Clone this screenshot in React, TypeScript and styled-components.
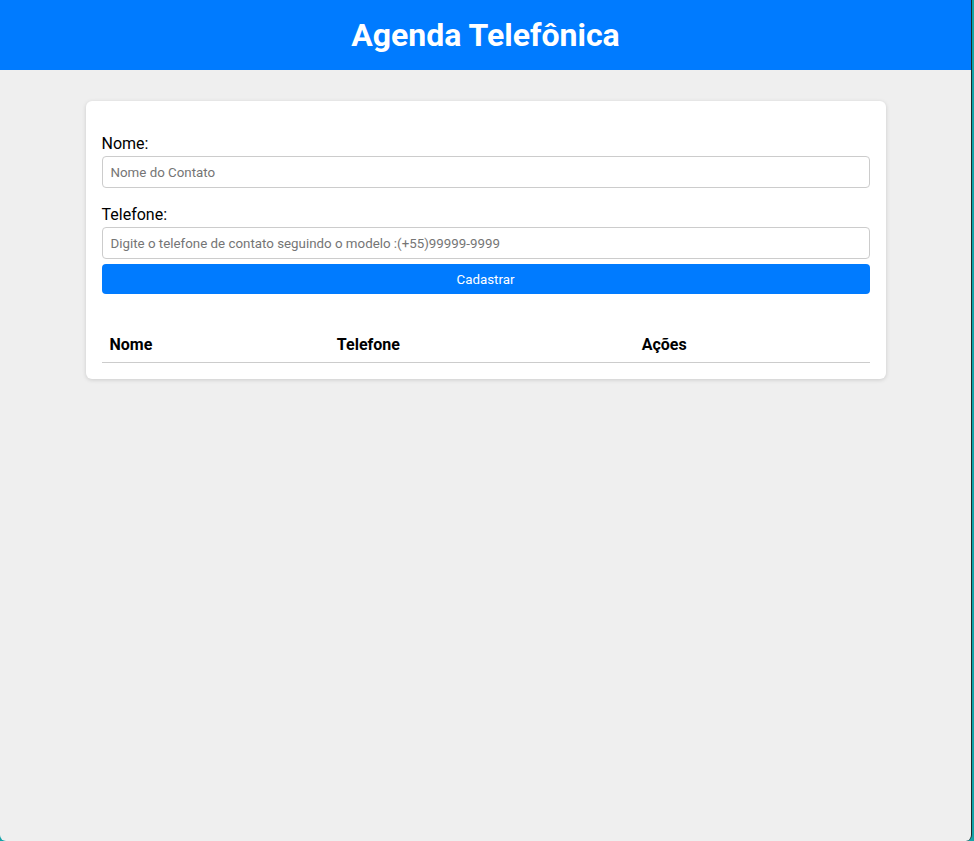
import React, { useState } from 'react';
import styled, { createGlobalStyle } from 'styled-components';

const GlobalStyle = createGlobalStyle`
  html {
    background-color: #13a3a8;
  }
  body {
    margin: 0;
    font-family: Roboto, "Liberation Sans", Arial, sans-serif;
  }
`;

const Page = styled.div`
  min-height: 100vh;
  margin-right: 2px;
  background-color: #efefef;
  border-right: 1px solid #1d2a2a;
  border-radius: 0 0 6px 6px;
  overflow: hidden;
`;

const Header = styled.header`
  height: 70px;
  display: flex;
  align-items: center;
  justify-content: center;
  background-color: #007bff;
`;

const Title = styled.h1`
  margin: 0;
  font-size: 32px;
  font-weight: bold;
  color: #fff;
`;

const Main = styled.main`
  display: flex;
  justify-content: center;
  padding-top: 31px;
`;

const Card = styled.div`
  width: 800px;
  box-sizing: border-box;
  padding: 0 16px 16px;
  background-color: #fff;
  border-radius: 6px;
  box-shadow: 0 1px 4px rgba(0, 0, 0, 0.15);
`;

const Form = styled.form`
  display: flex;
  flex-direction: column;
`;

const Group = styled.div`
  display: flex;
  flex-direction: column;
  margin-top: 17px;
  &:first-child {
    margin-top: 33px;
  }
`;

const Label = styled.label`
  font-size: 16px;
  line-height: 19px;
  color: #000;
  margin-bottom: 3px;
`;

const Input = styled.input`
  height: 32px;
  box-sizing: border-box;
  padding: 0 8px;
  border: 1px solid #ccc;
  border-radius: 4px;
  font-family: Roboto, "Liberation Sans", Arial, sans-serif;
  font-size: 13.333px;
  color: #000;
  outline: none;
  &::placeholder {
    color: #757575;
  }
`;

const Button = styled.button`
  margin-top: 5px;
  height: 30px;
  border: none;
  border-radius: 4px;
  background-color: #007bff;
  color: #fff;
  font-family: Roboto, "Liberation Sans", Arial, sans-serif;
  font-size: 13.333px;
  cursor: pointer;
`;

const Table = styled.table`
  width: 100%;
  margin-top: 33px;
  border-collapse: collapse;
`;

const Th = styled.th<{ $w: string }>`
  width: ${p => p.$w};
  padding: 8px;
  text-align: left;
  font-size: 16px;
  line-height: 19px;
  font-weight: bold;
  color: #000;
  border-bottom: 1px solid #ccc;
`;

interface Contato {
  nome: string;
  telefone: string;
}

export default function App(): React.ReactElement {
  const [nome, setNome] = useState('');
  const [telefone, setTelefone] = useState('');
  const [contatos, setContatos] = useState<Contato[]>([]);

  const cadastrar = (e: React.FormEvent) => {
    e.preventDefault();
    if (!nome || !telefone) return;
    setContatos([...contatos, { nome, telefone }]);
    setNome('');
    setTelefone('');
  };

  return (
    <>
      <GlobalStyle />
      <Page>
        <Header>
          <Title>Agenda Telefônica</Title>
        </Header>
        <Main>
          <Card>
            <Form onSubmit={cadastrar}>
              <Group>
                <Label htmlFor="nome">Nome:</Label>
                <Input
                  id="nome"
                  placeholder="Nome do Contato"
                  value={nome}
                  onChange={e => setNome(e.target.value)}
                />
              </Group>
              <Group>
                <Label htmlFor="telefone">Telefone:</Label>
                <Input
                  id="telefone"
                  placeholder="Digite o telefone de contato seguindo o modelo :(+55)99999-9999"
                  value={telefone}
                  onChange={e => setTelefone(e.target.value)}
                />
              </Group>
              <Button type="submit">Cadastrar</Button>
            </Form>
            <Table>
              <thead>
                <tr>
                  <Th $w="29.6%">Nome</Th>
                  <Th $w="39.7%">Telefone</Th>
                  <Th $w="30.7%">Ações</Th>
                </tr>
              </thead>
              <tbody>
                {contatos.map((c, i) => (
                  <tr key={i}>
                    <td>{c.nome}</td>
                    <td>{c.telefone}</td>
                    <td />
                  </tr>
                ))}
              </tbody>
            </Table>
          </Card>
        </Main>
      </Page>
    </>
  );
}
